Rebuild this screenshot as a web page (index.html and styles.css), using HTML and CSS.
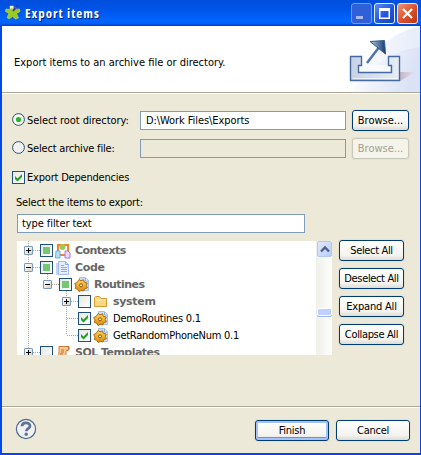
FILE: index.html
```html
<!DOCTYPE html>
<html lang="en">
<head>
<meta charset="utf-8">
<title>Export items</title>
<link rel="stylesheet" href="styles.css">
</head>
<body>
<svg class="defs" aria-hidden="true">
  <defs>
    <linearGradient id="gold" x1="0" y1="0" x2="0" y2="1"><stop offset="0" stop-color="#ffd65c"/><stop offset="1" stop-color="#d98a08"/></linearGradient>
    <symbol id="routine" viewBox="0 0 16 16">
      <path d="M5.500.500h6l3 3v10h-9z" fill="#cfe0fb" stroke="#9fc0f4"/><path d="M11.500 1v3h3" fill="#fff" stroke="#8ab0f0"/>
      <path d="M5 2.500l2 1.200 2.500-.9.700 2.400 3 .8-.8 2.500 1 2.400-2.700.7-.9 2.400-2.500-.6-2.300 1.100-1.300-2.300-2.400-.7.700-2.500L.700 6.500l2.500-1z" fill="url(#gold)" stroke="#b06b0c"/>
      <circle cx="7" cy="8.300" r="1.500" fill="#fff1bd" stroke="#8d5209"/>
    </symbol>
    <symbol id="tick" viewBox="0 0 13 13"><path d="M3 5v3l2.500 2.500L10 6V3L5.500 7.500z" fill="#21a121"/></symbol>
  </defs>
</svg>
<div class="window">
  <header class="titlebar">
    <svg class="appicon" width="16" height="16" viewBox="0 0 16 16"><path d="M5 2h3.500l.5 3.500 5.500-.5.5 2.500-3.500 2 2 4.500-3 1L7.500 12.500 4 15l-2-1.500 2-4L.5 7.500 1 5l4 .5z" fill="#9ccb1c" stroke="#b9dc55" stroke-width=".6"/><path d="M5 2h3v2.500h-3z" fill="#f2f4d0"/><path d="M8 7l5-6" stroke="#3333a8" stroke-width="1.800"/><path d="M9.500 3l3 2" stroke="#5a62c8" stroke-width="1.200"/></svg>
    <h1>Export items</h1>
    <div class="winbtns">
      <span class="wb min"><svg width="19" height="19"><path d="M4 12h7v3H4z" fill="#a9b8f2"/></svg></span>
      <span class="wb"><svg width="19" height="19"><path d="M4 4h11v11H4zM5.500 7v6.500h8V7z" fill="#fff" fill-rule="evenodd"/></svg></span>
      <span class="wb close"><svg width="19" height="19"><path d="M5 5l9 9M14 5l-9 9" stroke="#fff" stroke-width="2.200"/></svg></span>
    </div>
  </header>
  <div class="banner">
    <p>Export items to an archive file or directory.</p>
    <svg class="art" width="76" height="66" viewBox="0 0 76 66">
      <defs>
        <linearGradient id="sw" x1="0" y1="0" x2="1" y2="0"><stop offset="0" stop-color="#fff"/><stop offset="1" stop-color="#e6ecfa"/></linearGradient>
        <linearGradient id="sw2" x1="0" y1="0" x2="1" y2=".2"><stop offset="0" stop-color="#fff"/><stop offset="1" stop-color="#d9e2f6"/></linearGradient>
        <linearGradient id="tray" x1="0" y1="0" x2="1" y2="0"><stop offset="0" stop-color="#c7d2e4"/><stop offset="1" stop-color="#e8edf6"/></linearGradient>
        <linearGradient id="shadow" x1="0" y1="0" x2="1" y2="0"><stop offset="0" stop-color="#c4b4c4"/><stop offset="1" stop-color="#dfe5f5"/></linearGradient>
        <linearGradient id="arr" x1="0" y1="0" x2="1" y2="0"><stop offset="0" stop-color="#b3cbe5"/><stop offset="1" stop-color="#15386e"/></linearGradient>
      </defs>
      <path d="M0 66C15 40 40 8 76 0V66z" fill="url(#sw)"/>
      <path d="M8 66C28 38 50 24 76 21V66z" fill="url(#sw2)"/>
      <path d="M55 46h17L56 55h-1z" fill="url(#shadow)"/>
      <path d="M14 39h32v7H14z" fill="#f9fbff"/>
      <path d="M6.500 30.500h11v9h-3v7h33v-7h-3v-9h11v24h-49z" fill="url(#tray)" stroke="#456a9f" stroke-width="1.400"/>
      <path d="M8.500 52.500h45" stroke="#fff" opacity=".6"/>
      <path d="M23 37L36 20" stroke="#4f76aa" stroke-width="2.500"/>
      <path d="M26 15.500l14.500-1 1 13.500z" fill="url(#arr)" stroke="#315b91"/>
    </svg>
  </div>
  <main>
    <div class="row r1">
      <svg width="13" height="13" class="ctl"><circle cx="6.500" cy="6.500" r="5.900" fill="#f6f6f2" stroke="#1f5282"/><circle cx="6.500" cy="6.500" r="2.600" fill="#2cb52c"/></svg>
      <label class="s1">Select root directory:</label>
      <div class="input"><span class="s1">D:\Work Files\Exports</span></div>
      <button>Browse...</button>
    </div>
    <div class="row r2">
      <svg width="13" height="13" class="ctl"><circle cx="6.500" cy="6.500" r="5.900" fill="#f2f2ee" stroke="#1f5282"/></svg>
      <label class="s2">Select archive file:</label>
      <div class="input off"></div>
      <button disabled>Browse...</button>
    </div>
    <div class="row r3">
      <i class="cb"><svg width="11" height="11" viewBox="1 1 11 11"><use href="#tick" width="13" height="13"/></svg></i>
      <label class="s2">Export Dependencies</label>
    </div>
    <p class="caption s2">Select the items to export:</p>
    <div class="input filter"><span class="s1">type filter text</span></div>
    <div class="body">
      <div class="tree">
        <div class="nodes">
          <div class="node"><i class="ex plus"></i><i class="cb"><b></b></i>
            <svg class="ic" width="16" height="16"><path d="M3 2h10v10H3z" fill="none" stroke="#f58220" stroke-width="2"/><circle cx="7.500" cy="4" r="3" fill="#9cc95c"/><path d="M1 8h4v7H.500z" fill="#b7e2fb" stroke="#62aef1"/><path d="M10 8h3l2 2v5h-5z" fill="#ead9fa" stroke="#a77be5"/></svg>
            <strong>Contexts</strong></div>
          <div class="node"><i class="ex"></i><i class="cb"><b></b></i>
            <svg class="ic" width="16" height="16"><path d="M3.500 1.500h7l3 3v10h-10z" fill="#e4eeff" stroke="#9fb8f5"/><path d="M10.500 1.500v3h3M6 5.500h3M6 7.500h6M6 9.500h6M6 11.500h6M2 3v12" fill="none" stroke="#8ba7ef"/></svg>
            <strong class="code">Code</strong></div>
          <div class="node l1"><i class="ex"></i><i class="cb"><b></b></i>
            <svg class="ic" width="16" height="16"><use href="#routine"/></svg><strong>Routines</strong></div>
          <div class="node l2"><i class="ex plus"></i><i class="cb"></i>
            <svg class="ic" width="16" height="16"><path d="M1.500 12.500v-9l1-1h4l1.500 2h5.500v8z" fill="#fbd77f" stroke="#d69b35"/><path d="M2.500 6h10" stroke="#fff0b8"/></svg>
            <strong class="code">system</strong></div>
          <div class="node l2"><i class="ex none"></i><i class="cb"><svg width="11" height="11" viewBox="1 1 11 11"><use href="#tick" width="13" height="13"/></svg></i>
            <svg class="ic" width="16" height="16"><use href="#routine"/></svg><span class="s2">DemoRoutines 0.1</span></div>
          <div class="node l2"><i class="ex none"></i><i class="cb"><svg width="11" height="11" viewBox="1 1 11 11"><use href="#tick" width="13" height="13"/></svg></i>
            <svg class="ic" width="16" height="16"><use href="#routine"/></svg><span class="s3">GetRandomPhoneNum 0.1</span></div>
          <div class="node"><i class="ex plus"></i><i class="cb"></i>
            <svg class="ic" width="16" height="16"><path d="M4 1.500h10l-1 4h-2v8H2c2-2 2-4 2-12z" fill="#f9c995" stroke="#cf7c3b"/><path d="M12 1.500c3 0 3 4 0 4M6 5h3M6 7h3M5 9h3" fill="none" stroke="#c9682b"/><path d="M0 11h8v3H0z" fill="#cf4d20"/></svg>
            <strong>SQL Templates</strong></div>
          <svg class="lines" width="60" height="114"><path d="M11.500 0v114M30.500 33v6M49.500 50v44" stroke="#aaa797" stroke-dasharray="1 1"/></svg>
        </div>
        <div class="scroll">
          <div class="up"><svg width="14" height="15"><path d="M3 9.500l4-4 4 4" fill="none" stroke="#4d6185" stroke-width="2.300"/></svg></div>
          <div class="thumb"></div>
        </div>
      </div>
      <div class="side">
        <button class="s4">Select All</button>
        <button class="s4">Deselect All</button>
        <button class="s2">Expand All</button>
        <button class="s4">Collapse All</button>
      </div>
    </div>
  </main>
  <footer>
    <svg width="22" height="22" class="help" viewBox="0 0 22 22"><circle cx="11" cy="11" r="9.600" fill="#f1f1f3" stroke="#53698c" stroke-width="1.200"/><path d="M7 8.300C7 3.800 15 3.900 15 8c0 2.700-3.700 2.700-3.700 5.200" fill="none" stroke="#5d7296" stroke-width="2.700"/><circle cx="11.200" cy="16.300" r="1.700" fill="#5d7296"/></svg>
    <button class="primary s3">Finish</button>
    <button class="s3">Cancel</button>
  </footer>
</div>
</body>
</html>
```

FILE: styles.css
```css
* { box-sizing: border-box; }
body { margin: 0; font: 11px/14px "DejaVu Sans Condensed", "DejaVu Sans", sans-serif; font-stretch: condensed; color: #000; white-space: nowrap; overflow: hidden; }
p, h1 { margin: 0; }
svg { display: block; flex: none; }
.defs { position: absolute; width: 0; height: 0; }
.window { width: 421px; height: 455px; display: flex; flex-direction: column; background: #ece9d8; border: solid #0048e8; border-width: 0 1px 2px 2px; }
.titlebar { flex: none; height: 26px; margin: 0 -1px 0 -2px; padding: 0 3px 0 4px; display: flex; align-items: center; background: linear-gradient(#004fdc 0, #0054e8 35%, #0066ff 80%, #0060f5 90%, #003dce); }
.appicon { margin: -3px 0 0 1px; }
h1 { flex: 1; margin-left: 4px; font: bold 13px/18px "Open Sans", "Noto Sans", sans-serif; font-stretch: condensed; letter-spacing: 1px; color: #fff; text-shadow: 1px 1px #00207c; }
.winbtns { display: flex; gap: 2px; }
.wb { width: 21px; height: 21px; border: 1px solid #e4ecff; border-radius: 3px; background: linear-gradient(135deg, #5c8cf8, #2057dc 55%, #1643b8); }
.min { border-color: #7996ed; background: #3060d8; }
.close { background: linear-gradient(135deg, #f09678, #dc5530 50%, #b83410); }
.banner { flex: none; height: 67px; display: flex; justify-content: space-between; align-items: center; background: #fff; border-bottom: 1px solid #aca899; }
.banner p { margin: 8px 0 0 12px; }
.art { align-self: flex-start; }
main { flex: none; height: 313px; padding-left: 10px; border-top: 1px solid #fffdf4; }
.row { display: flex; align-items: center; height: 21px; }
.r1 { margin-top: 16px; }
.r2 { margin-top: 7px; }
.r3 { margin-top: 8px; }
.row .ctl { margin-top: -2px; }
.row label { width: 113px; margin-left: 2px; }
.s1 { letter-spacing: -.08px; }
.s2 { letter-spacing: -.2px; }
.s3 { letter-spacing: -.26px; }
.s4 { letter-spacing: -.35px; }
.input { width: 206px; height: 19px; border: 1px solid #7f9db9; background: #fff; padding: 2px 0 0 5px; }
.off { background: transparent; }
.row button { width: 57px; margin-left: 6px; }
button { height: 21px; padding: 0; border: 1px solid #003c74; border-radius: 3px; font: inherit; color: #000; background: linear-gradient(#fff, #f4f3ee 75%, #dfdbd0); box-shadow: 0 0 0 1px #e5e1d0; display: flex; justify-content: center; align-items: center; }
button:disabled { color: #a1a192; border-color: #c9c7ba; background: #f5f4ea; }
.cb { flex: none; width: 13px; height: 13px; border: 1px solid #1c5180; background: linear-gradient(135deg, #e6e6e1, #fff); }
.cb b { display: block; width: 7px; height: 7px; margin: 2px; background: #73c973; }
.caption { margin: 8px 0 0 4px; height: 18px; }
.filter { width: 288px; margin-left: 5px; padding-left: 4px; }
.body { display: flex; margin: 8px 0 0 5px; }
.tree { width: 315px; height: 114px; display: flex; background: #fff; overflow: hidden; }
.nodes { position: relative; flex: 1; padding-top: 1px; }
.lines { position: absolute; left: 0; top: 0; z-index: 0; }
.node { height: 17px; display: flex; align-items: center; padding-left: 7px; }
.node > * { position: relative; z-index: 1; }
.l1 { padding-left: 26px; }
.l2 { padding-left: 45px; }
.ex { flex: none; width: 9px; height: 9px; margin-right: 7px; border: 1px solid #7b9ab8; border-radius: 1px; background: linear-gradient(#000, #000) center/5px 1px no-repeat, linear-gradient(135deg, #fff, #d8d3c6); }
.plus { background: linear-gradient(#000, #000) center/5px 1px no-repeat, linear-gradient(#000, #000) center/1px 5px no-repeat, linear-gradient(135deg, #fff, #d8d3c6); }
.ex::after { content: ""; position: absolute; left: 8px; top: 3px; width: 7px; border-top: 1px dotted #aaa797; }
.none { border-color: transparent; background: none; }
.none::after { left: 4px; width: 11px; }
.ic { margin: 0 4px 0 2px; }
.node strong { font: bold 11px/14px "DejaVu Sans", sans-serif; letter-spacing: -.53px; color: #666; }
.node .code { letter-spacing: -.3px; }
.scroll { width: 16px; background: linear-gradient(90deg, #f0efea, #fefefb); display: flex; flex-direction: column; align-items: center; }
.up { width: 15px; height: 16px; border: 1px solid #b3c7f4; border-radius: 2px; background: linear-gradient(135deg, #e0e9ff, #b9cdfb); }
.thumb { width: 15px; height: 8px; margin-top: 51px; border: 1px solid #fff; border-radius: 2px; background: #bfd0fc; box-shadow: 0 1px #9db5e8; }
.side { display: flex; flex-direction: column; gap: 7px; margin: -1px 0 0 7px; }
.side button { width: 65px; }
footer { flex: 1; display: flex; padding: 13px 10px 0 13px; border-top: 1px solid #aca899; box-shadow: inset 0 1px #fff; }
.help { margin-right: auto; margin-top: -2px; }
footer button { width: 74px; margin-left: 7px; }
.primary { box-shadow: inset 0 0 0 2px #a5c1f5, inset 0 -3px #6f8fe3, 0 0 0 1px #e5e1d0; }
```
